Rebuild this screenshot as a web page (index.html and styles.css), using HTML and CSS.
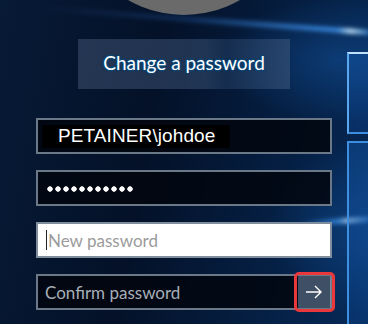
FILE: index.html
```html
<!DOCTYPE html>
<html lang="en">
<head>
  <meta charset="UTF-8">
  <meta name="viewport" content="width=device-width, initial-scale=1.0">
  <title>Change a password</title>
  <link rel="stylesheet" href="styles.css">
</head>
<body>
  <div class="screen">
    <!-- wallpaper decoration -->
    <div class="beam beam-top"></div>
    <div class="beam beam-low"></div>
    <div class="pane pane-upper"></div>
    <div class="pane pane-lower"></div>

    <div class="avatar"></div>
    <div class="title">Change a password</div>

    <form class="fields">
      <div class="field">
        <span class="user-name">PETAINER\johdoe</span>
      </div>
      <div class="field">
        <span class="dots"></span>
      </div>
      <div class="field field-active">
        <span class="caret"></span>
        <span class="placeholder">New password</span>
      </div>
      <div class="field">
        <span class="placeholder placeholder-dark">Confirm password</span>
        <button type="submit" class="submit" aria-label="Submit">
          <svg width="18" height="14" viewBox="0 0 18 14">
            <path d="M1 7 H16 M10 1 L16 7 L10 13" fill="none" stroke="#fff" stroke-width="1.4"/>
          </svg>
        </button>
      </div>
    </form>
  </div>
</body>
</html>
```

FILE: styles.css
```css
* {
  box-sizing: border-box;
  margin: 0;
  padding: 0;
}

body {
  width: 368px;
  height: 324px;
  overflow: hidden;
  font-family: 'Lato', sans-serif;
}

.screen {
  position: relative;
  width: 368px;
  height: 324px;
  overflow: hidden;
  display: flex;
  flex-direction: column;
  align-items: center;
  background:
    radial-gradient(ellipse 160px 130px at 380px 230px, rgba(20, 90, 170, 0.5), transparent 70%),
    radial-gradient(ellipse 170px 90px at 340px 60px, rgba(20, 90, 170, 0.45), transparent 70%),
    linear-gradient(100deg, #071a36 0%, #041128 40%, #062a58 100%),
    #041024;
}

/* wallpaper decoration */
.beam {
  position: absolute;
  pointer-events: none;
}

.beam-top {
  left: 40px;
  top: 30px;
  width: 330px;
  height: 5px;
  transform: rotate(4.2deg);
  transform-origin: right center;
  background: linear-gradient(to right, transparent 0%, rgba(50, 130, 230, 0.25) 45%, rgba(70, 160, 255, 0.75) 90%, rgba(200, 235, 255, 0.95) 94%, rgba(70, 160, 255, 0.5) 100%);
  filter: blur(2px);
}

.beam-low {
  left: 300px;
  top: 219px;
  width: 70px;
  height: 5px;
  transform: rotate(-4deg);
  background: linear-gradient(to right, transparent 0%, rgba(70, 160, 255, 0.7) 55%, rgba(200, 235, 255, 0.85) 70%, rgba(70, 160, 255, 0.5) 100%);
  filter: blur(2px);
}

.pane {
  position: absolute;
  left: 347px;
  width: 40px;
  border-left: 2px solid #5aa7f0;
  background: linear-gradient(to bottom, rgba(20, 90, 175, 0.4), rgba(12, 70, 150, 0.3));
}

.pane-upper {
  top: 52px;
  height: 82px;
  border-top: 2px solid #bfe0ff;
  border-bottom: 2px solid #3e8ee0;
}

.pane-lower {
  top: 141px;
  height: 200px;
  border-top: 2px solid #3e8ee0;
  border-left-color: #3f8fe0;
}

.avatar {
  flex: none;
  width: 224px;
  height: 224px;
  margin-top: -209px;
  border-radius: 50%;
  background: #6a6a6a;
}

.title {
  flex: none;
  width: 212px;
  height: 50px;
  margin-top: 24px;
  display: flex;
  align-items: center;
  justify-content: center;
  padding-bottom: 3px;
  background: linear-gradient(to right, rgba(60, 80, 110, 0.55), rgba(60, 85, 120, 0.5) 60%, rgba(40, 70, 110, 0.45) 70%, rgba(70, 95, 130, 0.5));
  color: #fff;
  font-size: 19px;
  text-shadow: 0 0 1px #0b4a7c, 1px 0 1px #0b4a7c, -1px 0 1px #0b4a7c, 0 1px 1px #0b4a7c, 0 -1px 1px #0b4a7c, 0 0 3px #0b4a7c;
}

.fields {
  width: 296px;
  margin-top: 29px;
  display: flex;
  flex-direction: column;
  gap: 16px;
}

.field {
  position: relative;
  height: 36px;
  display: flex;
  align-items: center;
  border: 2px solid #6b7888;
  background: rgba(2, 6, 14, 0.85);
}

.field-active {
  background: #fff;
  border-color: #7f8d9d;
}

.user-name {
  width: 188px;
  height: 23px;
  margin-left: 4px;
  padding-left: 16px;
  display: flex;
  align-items: center;
  border-radius: 2px;
  background: #000;
  color: #fff;
  font-family: 'Liberation Sans', Arial, sans-serif;
  font-size: 19px;
  letter-spacing: 0.1px;
}

.dots {
  width: 88px;
  height: 6px;
  margin-left: 9px;
  margin-top: 2px;
  background: radial-gradient(circle at 3px 3px, #fff 2.4px, transparent 3px) 0 0 / 8px 6px repeat-x;
}

.caret {
  width: 1px;
  height: 20px;
  margin-left: 8px;
  background: #222;
}

.placeholder {
  margin-left: 1px;
  color: #9b9b9b;
  font-size: 17px;
}

.placeholder-dark {
  margin-left: 7px;
  color: #a7aeb8;
}

.submit {
  position: absolute;
  right: -1px;
  top: 0;
  width: 33px;
  height: 32px;
  display: flex;
  align-items: center;
  justify-content: center;
  border: none;
  border-right: 1px solid #7b8898;
  background: #3e4f66;
  outline: 3px solid #e8383b;
  outline-offset: 1px;
  border-radius: 1px;
  cursor: pointer;
}
```
